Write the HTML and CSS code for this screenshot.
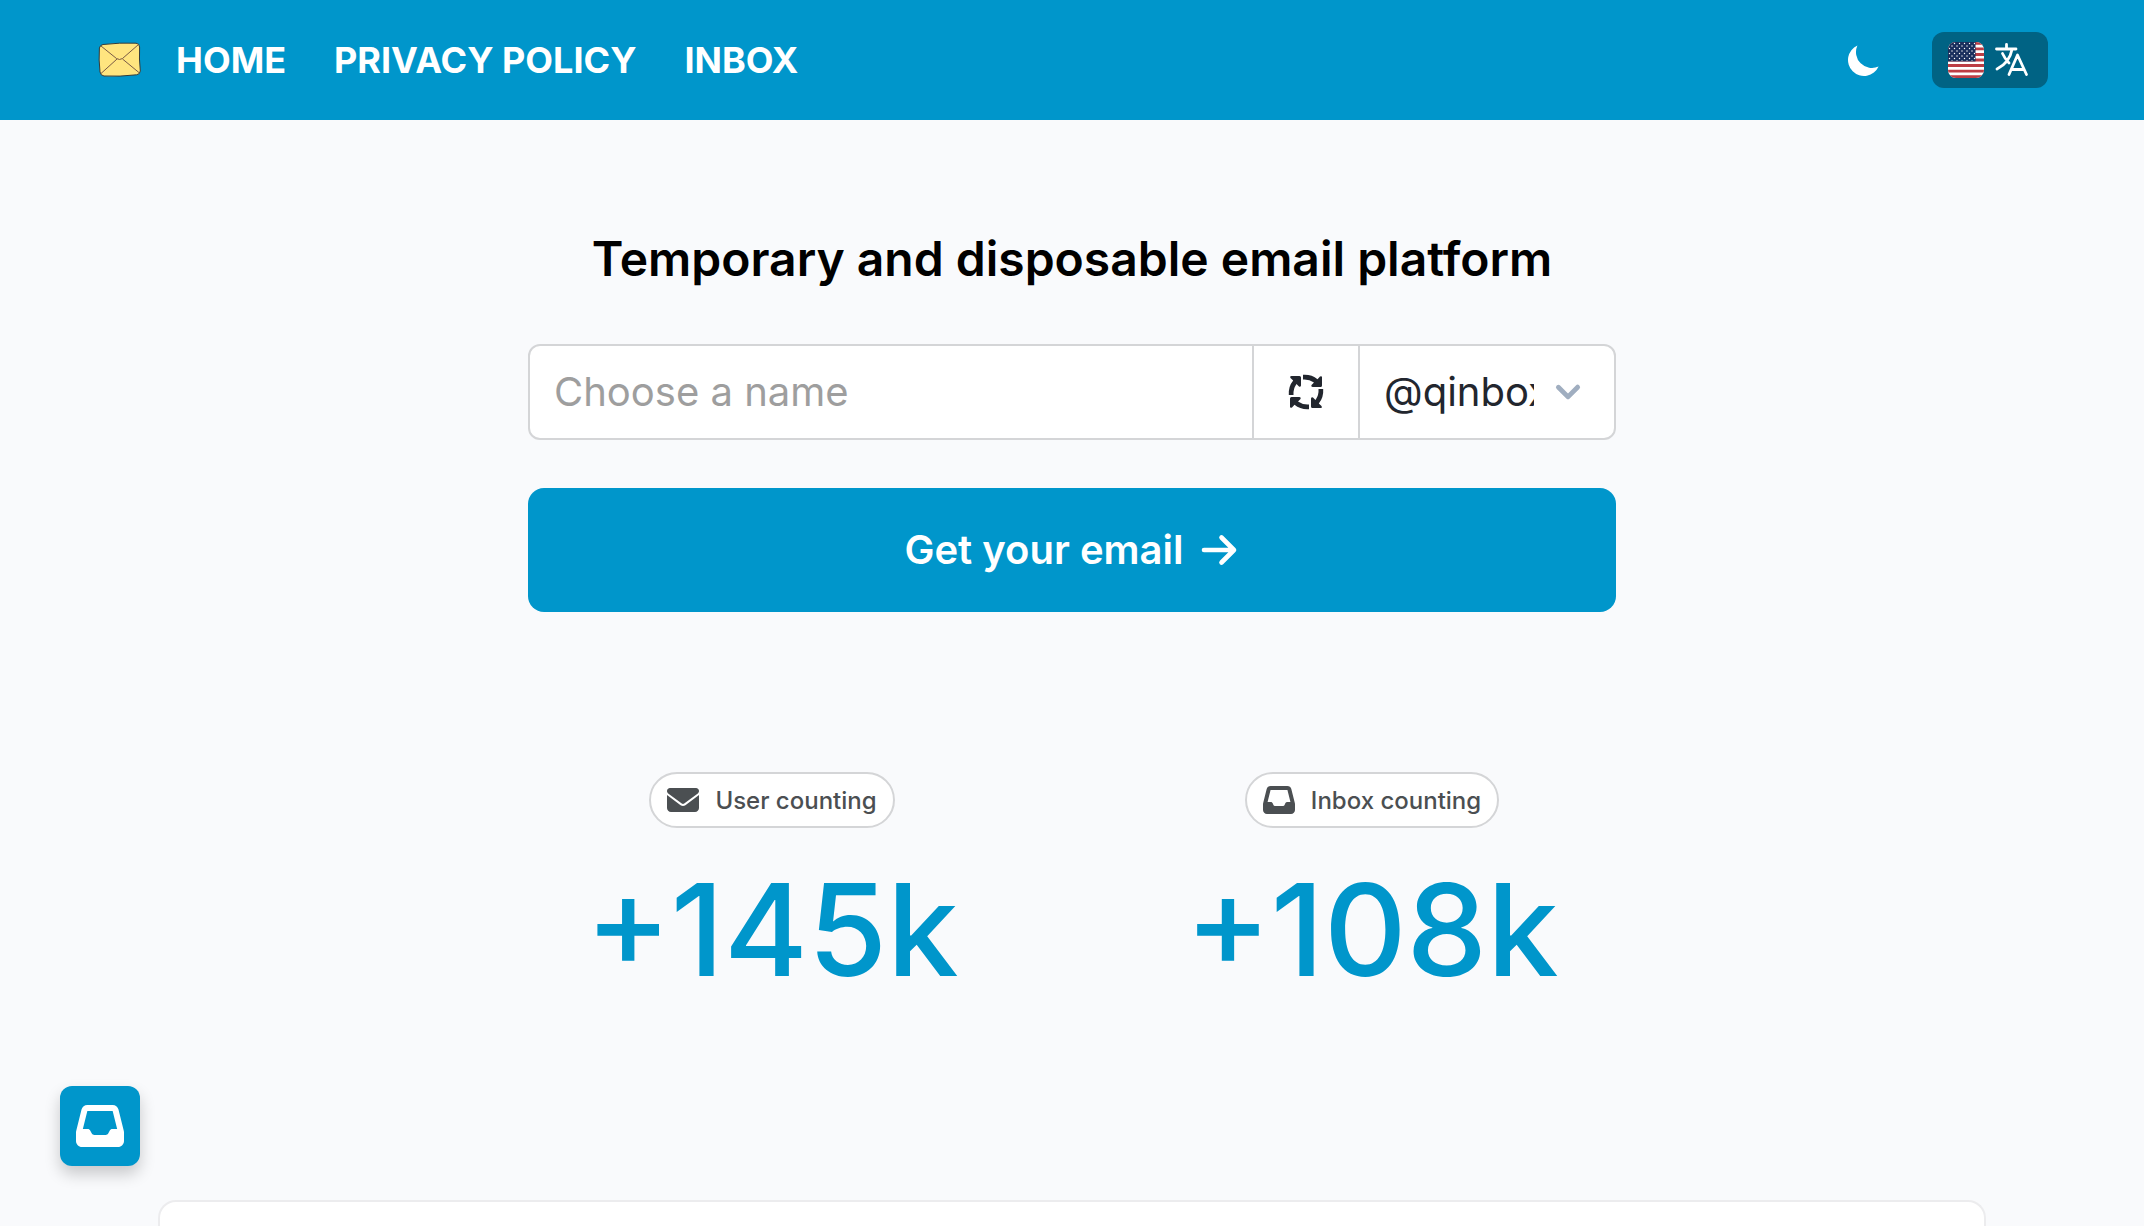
FILE: index.html
```
<!DOCTYPE html>
<html lang="en">
<head>
  <meta charset="UTF-8" />
  <meta name="viewport" content="width=device-width, initial-scale=1.0"/>
  <title>Temporary and disposable email platform</title>
  <link rel="stylesheet" href="styles.css">
</head>
<body>

  <header class="navbar">
    <nav class="nav-links">
      <a href="#" class="logo" aria-label="Home page">
        <svg width="44" height="36" viewBox="0 0 44 36" fill="none">
          <path d="M5 2.500Q22 .5 38 1.200Q41.500 1.500 41.600 5Q41 17 42.300 29Q42 32.500 38.500 32.800Q22 34.800 6 34Q2.500 33.500 2 30Q.6 18 1.400 6Q2 3 5 2.500Z" fill="#ffe57f" stroke="#333b3b"/>
          <path d="M3 4L18.500 16.500Q21.500 18.500 24.500 16.500L40.500 2.500M3 31.500L19 17M24.500 17L41.500 31" stroke="#7a5a45"/>
        </svg>
      </a>
      <a href="#home">HOME</a>
      <a href="#privacy">PRIVACY POLICY</a>
      <a href="#inbox">INBOX</a>
    </nav>
    <div class="nav-actions">
      <button type="button" class="theme-btn" aria-label="Dark mode">
        <svg width="40" height="40" viewBox="0 0 20 20" fill="currentColor"><path d="M17.293 13.293A8 8 0 016.707 2.707a8.001 8.001 0 1010.586 10.586z"/></svg>
      </button>
      <button type="button" class="lang-btn" aria-label="Change language">
        <svg class="flag" width="36" height="36" viewBox="0 0 36 36">
          <defs>
            <pattern id="stars" width="5" height="5" patternUnits="userSpaceOnUse">
              <circle cx="1.500" cy="1.500" r=".7" fill="#fff"/>
              <circle cx="4" cy="4" r=".7" fill="#fff"/>
            </pattern>
          </defs>
          <rect width="36" height="36" fill="#fff"/>
          <path d="M0 1.400H36M0 6.900H36M0 12.500H36M0 18H36M0 23.500H36M0 29.100H36M0 34.600H36" stroke="#bd3d44" stroke-width="2.770"/>
          <rect width="27.500" height="19.400" fill="#192f5d"/>
          <rect width="27" height="19" fill="url(#stars)"/>
        </svg>
        <svg width="34" height="34" viewBox="0 0 34 34" fill="none" stroke="currentColor" stroke-width="2.800" stroke-linecap="round" stroke-linejoin="round">
          <path d="M11.500 1.500V5.500M1.500 6H21M17 6.500C15.500 14.500 10 22 2 26M7.500 10.500Q10 16 14 20M14 31.500L22.500 12L31.500 31.500M17 26.500H28.500"/>
        </svg>
      </button>
    </div>
  </header>

  <main>
    <h1>Temporary and disposable email platform</h1>

    <form class="email-form">
      <div class="input-group">
        <input type="text" placeholder="Choose a name" aria-label="Choose a name">
        <button type="button" class="random-btn" aria-label="Random name">
          <svg width="36" height="36" viewBox="0 0 36 36" fill="currentColor">
            <defs>
              <path id="arrow" d="M15 .8Q23.500 .2 29.500 5.200L32 2.500Q34 1.500 34 3.500V11.500Q34 13 32.500 13H24.500Q22.500 12.500 23.500 11L26 8.500Q21 5 15 5.500Z"/>
            </defs>
            <use href="#arrow"/>
            <use href="#arrow" transform="rotate(90 18 18)"/>
            <use href="#arrow" transform="rotate(180 18 18)"/>
            <use href="#arrow" transform="rotate(270 18 18)"/>
          </svg>
        </button>
        <div class="select-wrap">
          <select aria-label="Domain">
            <option>@qinbox.com</option>
          </select>
          <svg class="chevron" width="48" height="48" viewBox="0 0 20 20" fill="currentColor"><path d="M5.293 7.293a1 1 0 011.414 0L10 10.586l3.293-3.293a1 1 0 111.414 1.414l-4 4a1 1 0 01-1.414 0l-4-4a1 1 0 010-1.414z"/></svg>
        </div>
      </div>

      <button type="button" class="submit-btn">
        Get your email
        <svg width="40" height="40" viewBox="0 0 40 40" fill="none" stroke="currentColor" stroke-width="4.600" stroke-linecap="round" stroke-linejoin="round"><path d="M5 21H34.500M22.500 8.500L35 21L22.500 33.500"/></svg>
      </button>
    </form>

    <section class="stats">
      <div class="stat">
        <div class="chip">
          <svg width="32" height="32" viewBox="0 0 512 512" fill="currentColor"><path d="M48 64C21.500 64 0 85.500 0 112c0 15.100 7.100 29.300 19.200 38.400L236.800 313.600c11.400 8.500 27 8.500 38.400 0L492.800 150.400c12.100-9.100 19.200-23.300 19.200-38.400c0-26.500-21.500-48-48-48H48zM0 176V384c0 35.300 28.700 64 64 64H448c35.300 0 64-28.700 64-64V176L294.400 339.200c-22.800 17.100-54 17.100-76.800 0L0 176z"/></svg>
          User counting
        </div>
        <div class="number">+145k</div>
      </div>
      <div class="stat">
        <div class="chip">
          <svg width="32" height="32" viewBox="0 0 512 512" fill="currentColor"><path d="M121 32C91.600 32 66 52 58.900 80.500L1.900 308.400C.6 313.500 0 318.700 0 323.900V416c0 35.300 28.700 64 64 64H448c35.300 0 64-28.700 64-64V323.900c0-5.200-.6-10.400-1.900-15.500l-57-227.900C446 52 420.400 32 391 32H121zm0 64H391l48 192H387.800c-12.100 0-23.200 6.800-28.600 17.700l-14.300 28.600c-5.400 10.800-16.500 17.700-28.600 17.700H195.800c-12.100 0-23.200-6.800-28.600-17.700l-14.300-28.600c-5.400-10.800-16.500-17.700-28.600-17.700H73L121 96z"/></svg>
          Inbox counting
        </div>
        <div class="number">+108k</div>
      </div>
    </section>

    <section class="card"></section>
  </main>

  <a href="#inbox" class="fab" aria-label="Open inbox">
    <svg width="48" height="48" viewBox="0 0 512 512" fill="currentColor"><path d="M121 32C91.600 32 66 52 58.900 80.500L1.900 308.400C.6 313.500 0 318.700 0 323.900V416c0 35.300 28.700 64 64 64H448c35.300 0 64-28.700 64-64V323.900c0-5.200-.6-10.400-1.900-15.500l-57-227.900C446 52 420.400 32 391 32H121zm0 64H391l48 192H387.800c-12.100 0-23.200 6.800-28.600 17.700l-14.300 28.600c-5.400 10.800-16.500 17.700-28.600 17.700H195.800c-12.100 0-23.200-6.800-28.600-17.700l-14.300-28.600c-5.400-10.800-16.500-17.700-28.600-17.700H73L121 96z"/></svg>
  </a>

</body>
</html>
```
FILE: styles.css
```
* {
  box-sizing: border-box;
}

body {
  font-family: Inter, sans-serif;
  margin: 0;
  min-height: 100vh;
  display: flex;
  flex-direction: column;
  background-color: #f9fafc;
  color: #000;
}

button, input, select {
  font-family: inherit;
  margin: 0;
  border: none;
}

button {
  padding: 0;
  cursor: pointer;
}

svg {
  display: block;
  flex-shrink: 0;
}

.navbar {
  display: flex;
  align-items: center;
  justify-content: space-between;
  height: 120px;
  padding: 0 96px;
  background-color: #0096cb;
  color: #fff;
}

.nav-links {
  display: flex;
  align-items: center;
  gap: 48px;
}

.nav-links a {
  color: #fff;
  font-size: 36px;
  font-weight: 700;
  text-decoration: none;
}

.nav-links .logo {
  padding-left: 2px;
  margin-right: -14px;
}

.nav-actions {
  display: flex;
  align-items: center;
  gap: 48px;
}

.theme-btn {
  background: none;
  color: #fff;
}

.lang-btn {
  display: flex;
  align-items: center;
  gap: 11px;
  height: 56px;
  padding: 0 19px 0 16px;
  border-radius: 12px;
  background-color: #006384;
  color: #fff;
}

.flag {
  border-radius: 8px;
}

main {
  flex: 1;
  display: flex;
  flex-direction: column;
  align-items: center;
  padding-top: 110px;
}

h1 {
  margin: 0 0 56px;
  font-size: 48px;
  font-weight: 600;
  line-height: 58px;
  text-align: center;
}

.email-form {
  width: 100%;
  max-width: 1088px;
}

.input-group {
  display: flex;
  height: 96px;
  margin-bottom: 48px;
  border: 2px solid #d4d5d7;
  border-radius: 12px;
  background: #fff;
  overflow: hidden;
}

.input-group input {
  flex: 1;
  min-width: 0;
  padding: 0 24px 2px;
  font-size: 40px;
  background: none;
}

.input-group input::placeholder {
  color: #9e9e9e;
}

.random-btn {
  display: flex;
  align-items: center;
  justify-content: center;
  width: 108px;
  border-left: 2px solid #d4d5d7;
  border-right: 2px solid #d4d5d7;
  background: none;
  color: #22262e;
}

.select-wrap {
  position: relative;
  width: 254px;
}

.select-wrap select {
  width: 100%;
  height: 100%;
  padding: 0 80px 2px 24px;
  appearance: none;
  font-size: 40px;
  background: none;
  color: #22262e;
}

.chevron {
  position: absolute;
  top: 22px;
  right: 22px;
  color: #a0aec0;
  pointer-events: none;
}

.submit-btn {
  display: flex;
  align-items: center;
  justify-content: center;
  gap: 16px;
  width: 100%;
  height: 124px;
  padding-bottom: 2px;
  border-radius: 16px;
  background-color: #0096cb;
  color: #fff;
  font-size: 40px;
  font-weight: 600;
}

.stats {
  display: grid;
  grid-template-columns: 1fr 1fr;
  width: 100%;
  max-width: 1200px;
  margin: 160px 0 208px;
}

.stat {
  display: flex;
  flex-direction: column;
  align-items: center;
  gap: 40px;
}

.chip {
  display: flex;
  align-items: center;
  gap: 16px;
  height: 56px;
  padding: 0 16px;
  border: 2px solid #d4d5d7;
  border-radius: 28px;
  background: #fff;
  color: #4b4f52;
  font-size: 24px;
  font-weight: 500;
}

.number {
  color: #0096cb;
  font-size: 128px;
  font-weight: 500;
  line-height: 124px;
}

.card {
  flex: 1;
  align-self: stretch;
  min-height: 26px;
  margin: 0 158px;
  border: 2px solid #ececee;
  border-bottom: none;
  border-radius: 18px 18px 0 0;
  background: #fff;
}

.fab {
  position: fixed;
  left: 60px;
  bottom: 60px;
  display: flex;
  align-items: center;
  justify-content: center;
  width: 80px;
  height: 80px;
  border-radius: 12px;
  background-color: #0096cb;
  color: #fff;
  box-shadow: 0 8px 16px rgba(0, 0, 0, 0.2);
}

@media (max-width: 1100px) {
  .navbar {
    padding: 0 24px;
  }
  .card {
    margin: 0 24px;
  }
}
```
